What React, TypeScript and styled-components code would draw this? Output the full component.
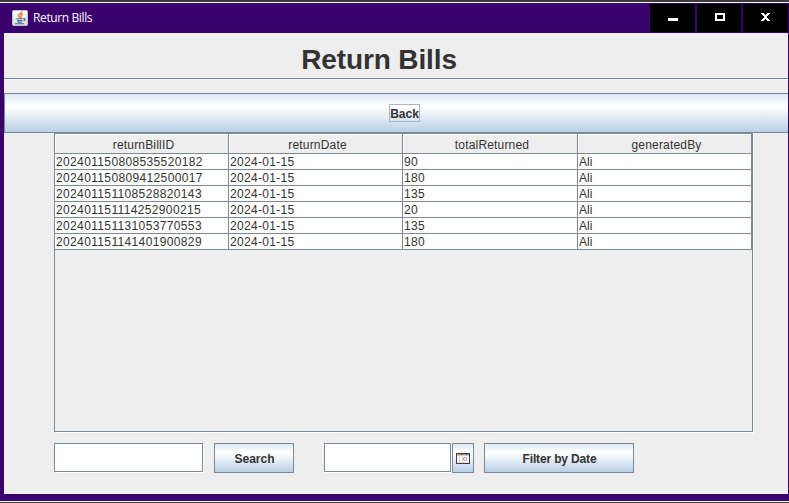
import React from "react";
import styled, { createGlobalStyle } from "styled-components";

const line = "#7a8a99";
const metal = "linear-gradient(#dde8f3 0%, #ffffff 30%, #ffffff 34%, #b8cfe5 100%)";

const GlobalStyle = createGlobalStyle`
  * { box-sizing: border-box; }
  body { margin: 0; overflow: hidden; }
`;

const Window = styled.div`
  width: 789px;
  height: 503px;
  display: flex;
  flex-direction: column;
  background: #3a006c;
  border-top: 2px solid #3c3c3c;
  border-bottom: 1px solid #3c3c3c;
  font: 12px "Liberation Sans", Arial, sans-serif;
  color: #333333;
`;

const Frame = styled.div`
  flex: 1;
  display: flex;
  flex-direction: column;
  border-top: 1px solid #fff;
  border-bottom: 1px solid #fff;
`;

const TitleBar = styled.header`
  height: 30px;
  flex: none;
  display: flex;
  align-items: center;
  padding-left: 12px;
  color: #fff;
  font: 12px "Open Sans", "Noto Sans", sans-serif;
`;

const TitleText = styled.span`
  margin-left: 5px;
  padding-bottom: 2px;
  flex: 1;
  letter-spacing: -0.38px;
`;

const WindowControls = styled.div`
  display: flex;
  gap: 2px;
  height: 28px;
  margin: 0 1px 1px 0;
`;

const ControlButton = styled.button<{ $width: number }>`
  width: ${(p) => p.$width}px;
  height: 28px;
  padding: 0;
  border: 0;
  background: #000;
  display: flex;
`;

const Content = styled.main`
  width: 784px;
  height: 461px;
  margin-left: 4px;
  background: #eeeeee;
`;

const Heading = styled.h1`
  margin: 0;
  height: 47px;
  padding: 10px 34px 0 0;
  text-align: center;
  font-size: 28px;
  line-height: 33px;
  letter-spacing: -0.12px;
  border-bottom: 1px solid #fff;
  box-shadow: inset 0 -1px #6382bf;
`;

const BackButton = styled.button`
  display: flex;
  width: 784px;
  height: 40px;
  margin-top: 13px;
  padding: 0 0 0 16px;
  align-items: center;
  justify-content: center;
  border: 1px solid ${line};
  border-right: 0;
  background: ${metal};
  font: bold 12px "Liberation Sans", Arial, sans-serif;
  color: #333;
`;

const FocusBox = styled.span`
  width: 31px;
  height: 18px;
  padding-top: 2px;
  line-height: 16px;
  border: 1px solid #a3b8cc;
  display: flex;
  align-items: center;
  justify-content: center;
`;

const TablePane = styled.div`
  width: 699px;
  height: 299px;
  margin-left: 50px;
  border: 1px solid ${line};
  box-shadow: 1px 1px #fff;
`;

const Table = styled.div`
  width: 697px;
`;

const Row = styled.div`
  display: grid;
  grid-template-columns: 174px 174px 175px 174px;
`;

const HeaderCell = styled.div`
  height: 20px;
  border-right: 1px solid ${line};
  border-bottom: 1px solid ${line};
  box-shadow: inset 1px 1px #fff;
  text-align: center;
  line-height: 22px;
  letter-spacing: 0.18px;
  padding-left: 4px;
`;

const Cell = styled.div<{ $spacing: number }>`
  height: 16px;
  border-right: 1px solid ${line};
  border-bottom: 1px solid ${line};
  background: #fff;
  padding-left: 1px;
  line-height: 16px;
  letter-spacing: ${(p) => p.$spacing}px;
`;

const SearchBar = styled.div`
  display: flex;
  margin: 11px 0 0 50px;
`;

const Field = styled.input<{ $width: number; $gap: number }>`
  width: ${(p) => p.$width}px;
  height: 29px;
  margin: 0 ${(p) => p.$gap}px 0 0;
  padding: 0 4px;
  border: 1px solid ${line};
  border-radius: 0;
  outline: 0;
  background: #fff;
  box-shadow: 1px 1px #fff;
`;

const ActionButton = styled.button<{ $width: number; $gap?: number; $spacing?: number }>`
  width: ${(p) => p.$width}px;
  height: 30px;
  margin: 0 ${(p) => p.$gap ?? 0}px 0 0;
  padding: 2px 0 0 1px;
  border: 1px solid ${line};
  background: ${metal};
  font: bold 12px "Liberation Sans", Arial, sans-serif;
  letter-spacing: ${(p) => p.$spacing ?? 0}px;
  color: #333;
  display: flex;
  align-items: center;
  justify-content: center;
`;

const PickerButton = styled(ActionButton)`
  padding: 9px 0 0 3px;
  align-items: flex-start;
  justify-content: flex-start;
`;

const JavaIcon = () => (
  <svg width="16" height="16" viewBox="0 0 16 16">
    <defs>
      <linearGradient id="tile" x1="0" y1="0" x2="0" y2="1">
        <stop offset="0" stopColor="#ffffff" />
        <stop offset="1" stopColor="#d5dbe0" />
      </linearGradient>
    </defs>
    <rect x=".5" y=".5" width="15" height="15" rx="1" fill="url(#tile)" stroke="#c0c6cc" />
    <path d="M10.2 1.6C9.8 3.4 6 4 6.3 5.7c.2 1 1.4 1.5 1.5 2.4M11 4.2C8.8 4.8 8.5 5.6 9 6.4c.4.6.1 1.1-.4 1.6" fill="none" stroke="#e5762a" strokeWidth="1.3" />
    <path d="M4.2 8.7h6.6M5 10.6h5.4M5.6 12.2h4.2M3 13.8h9.2M11.2 8.7c2.8-.7 2.4 1.9.1 2.3" fill="none" stroke="#466c8c" strokeWidth="1.1" />
  </svg>
);

const CalendarIcon = () => (
  <svg width="14" height="11" viewBox="0 0 14 11" shapeRendering="crispEdges">
    <rect width="14" height="11" fill="#403c40" />
    <rect x="1" y="1" width="5" height="1" fill="#e8a34c" />
    <rect x="6" y="1" width="7" height="1" fill="#82a5d0" />
    <rect x="1" y="2" width="12" height="1" fill="#c9ccd0" />
    <path d="M5 1h1v1h-1zM10 1h1v1h-1z" fill="#403c40" />
    <rect x="1" y="3" width="12" height="7" fill="#fff" />
    <path d="M3 3h1v7H3zM6 3h1v7H6zM1 9h12v1H1z" fill="#dedede" />
    <rect x="7.5" y="4.5" width="3" height="3" rx="1" fill="none" stroke="#ed6670" shapeRendering="auto" />
  </svg>
);

const columns = ["returnBillID", "returnDate", "totalReturned", "generatedBy"];
const bills = [
  ["202401150808535520182", "2024-01-15", "90", "Ali"],
  ["202401150809412500017", "2024-01-15", "180", "Ali"],
  ["202401151108528820143", "2024-01-15", "135", "Ali"],
  ["202401151114252900215", "2024-01-15", "20", "Ali"],
  ["202401151131053770553", "2024-01-15", "135", "Ali"],
  ["202401151141401900829", "2024-01-15", "180", "Ali"],
];
const cellSpacing = [0.36, 0.3, 0.327, 0];

export default function App() {
  return (
    <>
      <GlobalStyle />
      <Window>
        <Frame>
          <TitleBar>
            <JavaIcon />
            <TitleText>Return Bills</TitleText>
            <WindowControls>
              <ControlButton $width={45} aria-label="Minimize">
                <svg width="45" height="28"><path d="M18 14h10v3H18z" fill="#fff" /></svg>
              </ControlButton>
              <ControlButton $width={44} aria-label="Maximize">
                <svg width="44" height="28"><path d="M18 9h10v8H18zM20 11v4h6v-4z" fill="#fff" fillRule="evenodd" /></svg>
              </ControlButton>
              <ControlButton $width={45} aria-label="Close">
                <svg width="45" height="28" shapeRendering="crispEdges">
                  <path d="M18 9h3v1h1v1h1v-1h1V9h3v1h-1v1h-1v1h-1v2h1v1h1v1h1v1h-3v-1h-1v-1h-1v1h-1v1h-3v-1h1v-1h1v-1h1v-2h-1v-1h-1v-1h-1z" fill="#fff" />
                </svg>
              </ControlButton>
            </WindowControls>
          </TitleBar>
          <Content>
            <Heading>Return Bills</Heading>
            <BackButton><FocusBox>Back</FocusBox></BackButton>
            <TablePane>
              <Table role="table">
                <Row role="row">
                  {columns.map((name) => <HeaderCell role="columnheader" key={name}>{name}</HeaderCell>)}
                </Row>
                {bills.map((bill) => (
                  <Row role="row" key={bill[0]}>
                    {bill.map((value, i) => <Cell role="cell" $spacing={cellSpacing[i]} key={i}>{value}</Cell>)}
                  </Row>
                ))}
              </Table>
            </TablePane>
            <SearchBar>
              <Field $width={149} $gap={11} aria-label="Bill ID" />
              <ActionButton $width={80} $gap={30}>Search</ActionButton>
              <Field $width={127} $gap={1} aria-label="Date" />
              <PickerButton $width={22} $gap={10} aria-label="Choose date"><CalendarIcon /></PickerButton>
              <ActionButton $width={150} $spacing={-0.15}>Filter by Date</ActionButton>
            </SearchBar>
          </Content>
        </Frame>
      </Window>
    </>
  );
}
